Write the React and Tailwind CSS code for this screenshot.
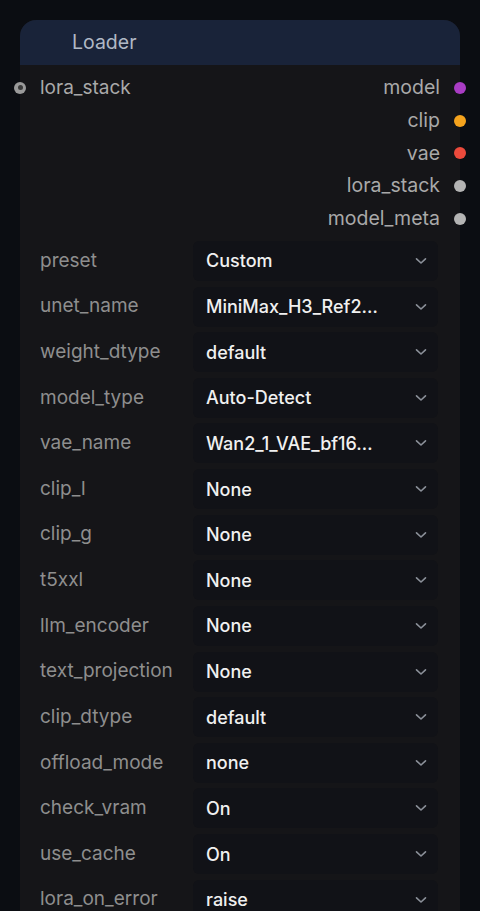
import React from "react";

const outputs = [
  { name: "model", color: "bg-[#a93cc4]" },
  { name: "clip", color: "bg-[#f5a31d]" },
  { name: "vae", color: "bg-[#ec4a3c]" },
  { name: "lora_stack", color: "bg-[#b4b4b4]" },
  { name: "model_meta", color: "bg-[#b4b4b4]" },
];

const widgets = [
  ["preset", "Custom"],
  ["unet_name", "MiniMax_H3_Ref2…"],
  ["weight_dtype", "default"],
  ["model_type", "Auto-Detect"],
  ["vae_name", "Wan2_1_VAE_bf16…"],
  ["clip_l", "None"],
  ["clip_g", "None"],
  ["t5xxl", "None"],
  ["llm_encoder", "None"],
  ["text_projection", "None"],
  ["clip_dtype", "default"],
  ["offload_mode", "none"],
  ["check_vram", "On"],
  ["use_cache", "On"],
  ["lora_on_error", "raise"],
];

function Chevron() {
  return (
    <svg width="12" height="8" viewBox="0 0 12 8" fill="none">
      <path d="M1.5 1.8 L6 6 L10.5 1.8" stroke="#8b9099" strokeWidth="1.6" strokeLinecap="round" strokeLinejoin="round" />
    </svg>
  );
}

export default function App() {
  return (
    <div
      className="w-[480px] h-[911px] overflow-hidden bg-[#0b0d12] pt-[20px] pl-[20px]"
      style={{ fontFamily: "Inter, 'Noto Sans', sans-serif" }}
    >
      <div className="relative w-[440px] h-[900px] rounded-t-[16px] bg-[#151518]">
        <div className="h-[45px] rounded-t-[16px] bg-[#192339] flex items-center pl-[52px] text-[19.5px] text-[#b0b8c5]">
          Loader
        </div>
        <div className="relative pt-[6.5px]">
          {outputs.map((o, i) => (
            <div key={o.name} className="relative h-[32.7px] flex items-center justify-end pr-[20px]">
              {i === 0 && (
                <div className="absolute left-[20px] text-[19px] text-[#a9a9a9]">lora_stack</div>
              )}
              {i === 0 && (
                <div className="absolute left-[-6px] w-[12px] h-[12px] rounded-full bg-[#9a9a9a] flex items-center justify-center">
                  <div className="w-[5px] h-[5px] rounded-full bg-[#3a3a3a]" />
                </div>
              )}
              <span className="text-[19.5px] text-[#a9a9a9]">{o.name}</span>
              <div className={`absolute right-[-6px] w-[12px] h-[12px] rounded-full ${o.color}`} />
            </div>
          ))}
        </div>
        <div className="pt-[6px] flex flex-col gap-[5.64px]">
          {widgets.map(([label, value]) => (
            <div key={label} className="h-[40px] flex items-center">
              <div className="w-[173px] pl-[20px] text-[19px] text-[#8e8e8e] whitespace-nowrap">{label}</div>
              <div className="w-[245px] h-[40px] rounded-[6px] bg-[#111217] flex items-center pl-[13px] pr-[11px]">
                <span className="flex-1 text-[18px] font-medium text-[#f0f0f0] whitespace-nowrap overflow-hidden">{value}</span>
                <Chevron />
              </div>
            </div>
          ))}
        </div>
      </div>
    </div>
  );
}
